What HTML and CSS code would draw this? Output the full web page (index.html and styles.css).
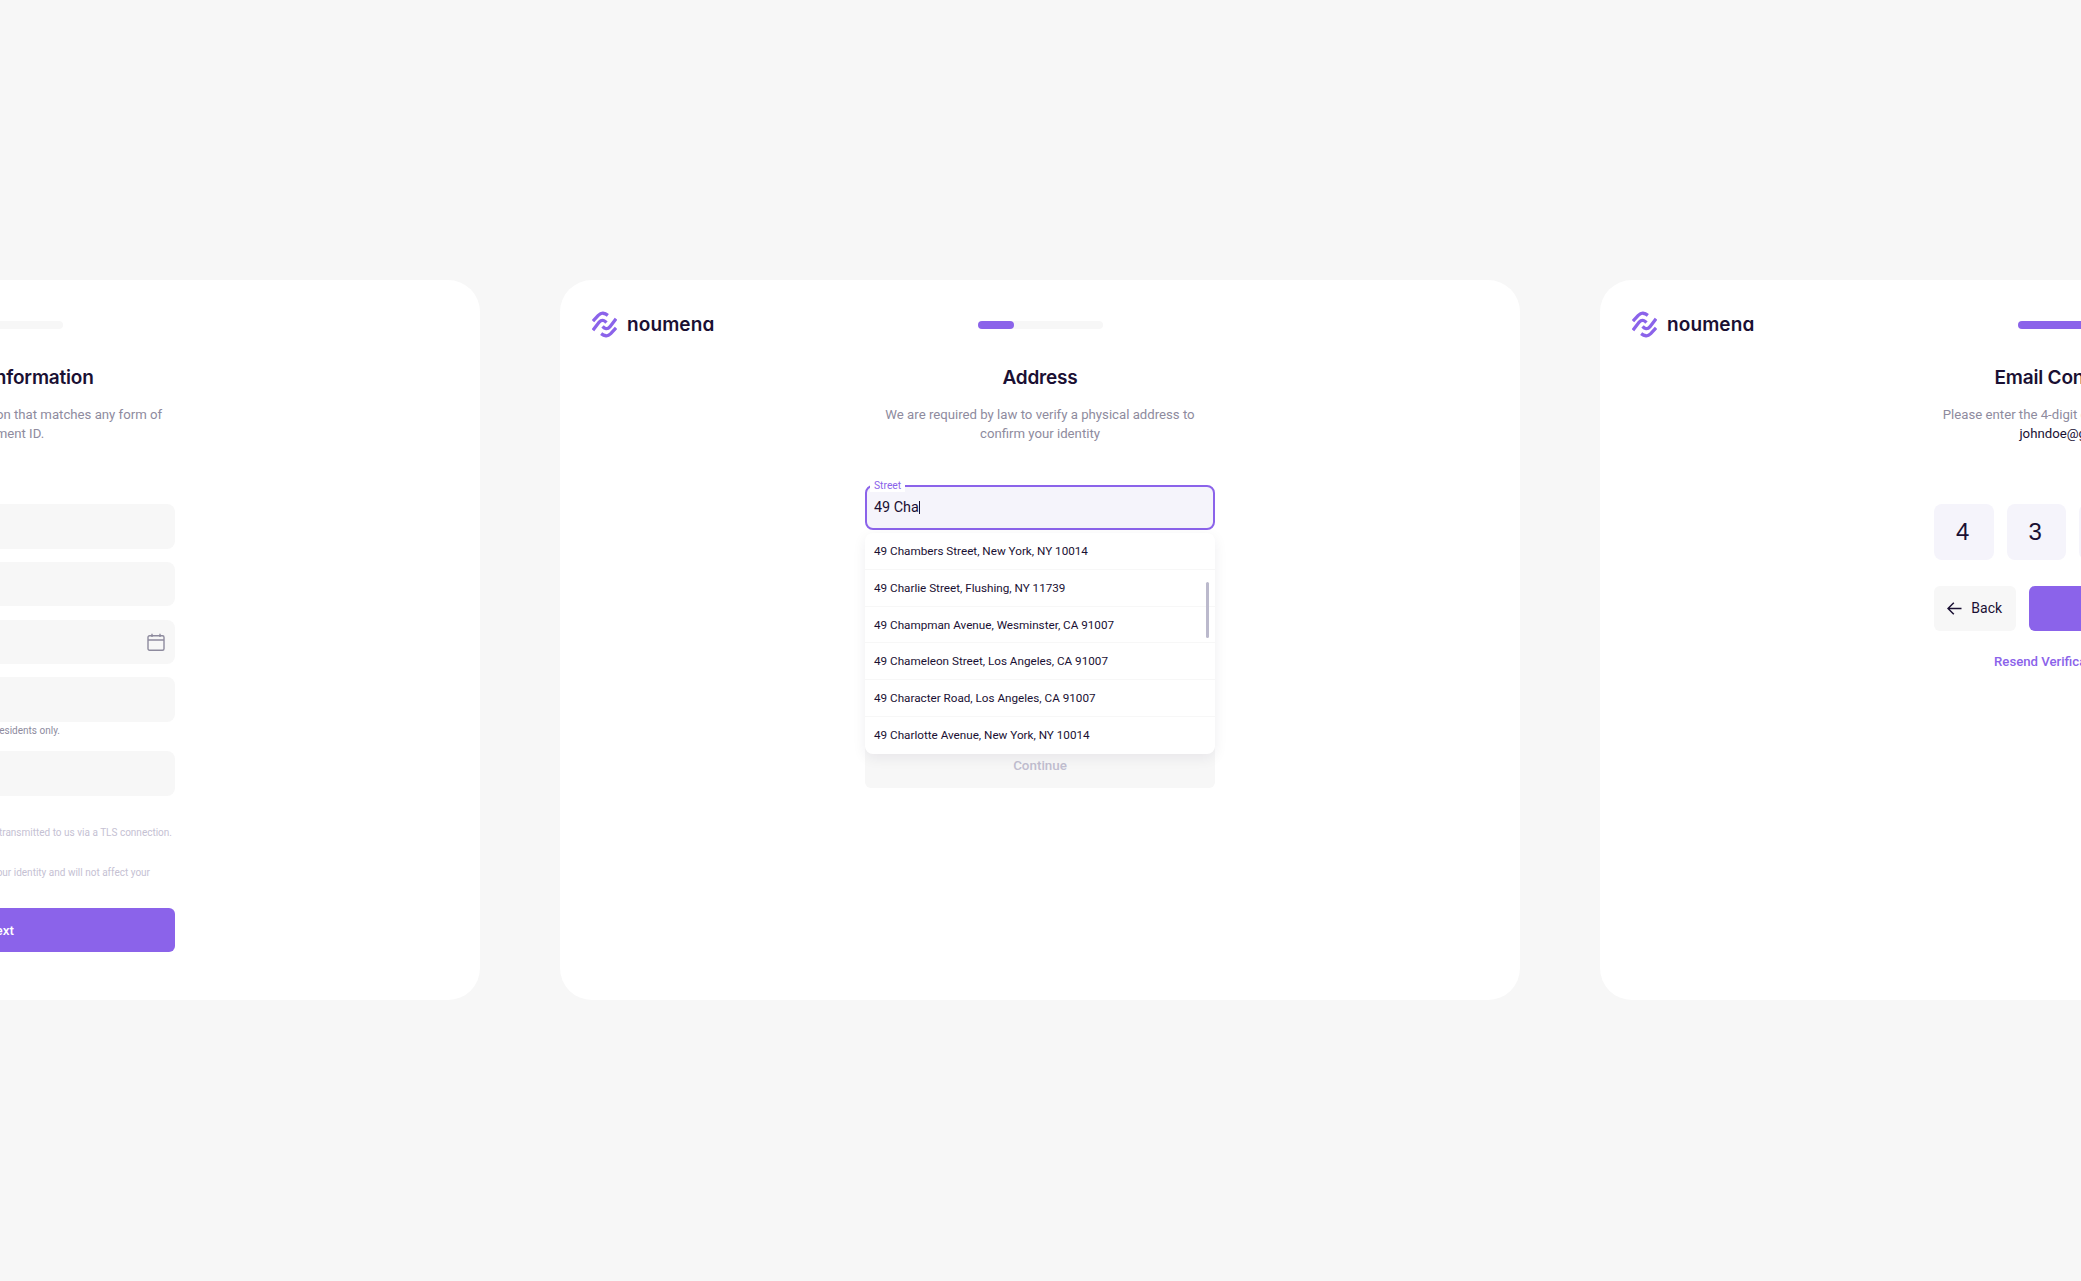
FILE: index.html
```html
<!DOCTYPE html>
<html lang="en">
<head>
<meta charset="utf-8">
<title>Noumena onboarding</title>
<link rel="stylesheet" href="styles.css">
</head>
<body>
<main class="stage">
  <section class="card">
    <header class="card-head">
      <div class="brand">
        <svg class="brand-mark" viewBox="0 0 26 27" fill="none"><path class="mark-path" d="M1 10L6.500 4Q9 1.600 11.500 1.800Q14 2 16.500 4"/><path class="mark-path" d="M1 19.500L7.500 11Q9.500 8.600 12 9.300Q13.500 9.800 15 11.500"/><path class="mark-path" d="M25 17L19.500 23Q17 25.400 14.500 25.200Q12 25 9.500 23"/><path class="mark-path" d="M25 7.500L18.500 16Q16.500 18.400 14 17.700Q12.500 17.200 11 15.500"/></svg>
        <span class="brand-name">noumena</span>
      </div>
      <div class="progress"><div class="progress-fill fill-1"></div></div>
    </header>
    <div class="body">
      <h1 class="title">Personal Information</h1>
      <p class="desc">Please enter your information that matches any form of<br>government ID.</p>
      <form class="form form-wide">
        <div class="field"></div>
        <div class="field"></div>
        <div class="field field-icon">
          <svg class="cal" viewBox="0 0 18 18" fill="none"><rect x="1" y="2.800" width="16" height="14.400" rx="1.500"/><path d="M1 7H17M5 .8V4M13 .8V4"/></svg>
        </div>
        <div class="field"></div>
        <p class="hint">This information is required from US residents only.</p>
        <div class="field field-after-hint"></div>
        <p class="fine fine-first">All information is encrypted and transmitted to us via a TLS connection.</p>
        <p class="fine fine-second">This check is only used to verify your identity and will not affect your</p>
        <button class="btn btn-primary btn-next" type="button">Next</button>
      </form>
    </div>
  </section>

  <section class="card">
    <header class="card-head">
      <div class="brand">
        <svg class="brand-mark" viewBox="0 0 26 27" fill="none"><path class="mark-path" d="M1 10L6.500 4Q9 1.600 11.500 1.800Q14 2 16.500 4"/><path class="mark-path" d="M1 19.500L7.500 11Q9.500 8.600 12 9.300Q13.500 9.800 15 11.500"/><path class="mark-path" d="M25 17L19.500 23Q17 25.400 14.500 25.200Q12 25 9.500 23"/><path class="mark-path" d="M25 7.500L18.500 16Q16.500 18.400 14 17.700Q12.500 17.200 11 15.500"/></svg>
        <span class="brand-name">noumena</span>
      </div>
      <div class="progress"><div class="progress-fill fill-2"></div></div>
    </header>
    <div class="body">
      <h1 class="title">Address</h1>
      <p class="desc">We are required by law to verify a physical address to<br>confirm your identity</p>
      <form class="form form-address">
        <div class="street">
          <span class="street-label">Street</span>
          <span class="street-value">49 Cha<i class="caret"></i></span>
        </div>
        <button class="btn btn-disabled" type="button">Continue</button>
        <ul class="suggest">
          <li>49 Chambers Street, New York, NY 10014</li>
          <li>49 Charlie Street, Flushing, NY 11739</li>
          <li>49 Champman Avenue, Wesminster, CA 91007</li>
          <li>49 Chameleon Street, Los Angeles, CA 91007</li>
          <li>49 Character Road, Los Angeles, CA 91007</li>
          <li>49 Charlotte Avenue, New York, NY 10014</li>
          <li class="scroll-thumb" aria-hidden="true"></li>
        </ul>
      </form>
    </div>
  </section>

  <section class="card">
    <header class="card-head">
      <div class="brand">
        <svg class="brand-mark" viewBox="0 0 26 27" fill="none"><path class="mark-path" d="M1 10L6.500 4Q9 1.600 11.500 1.800Q14 2 16.500 4"/><path class="mark-path" d="M1 19.500L7.500 11Q9.500 8.600 12 9.300Q13.500 9.800 15 11.500"/><path class="mark-path" d="M25 17L19.500 23Q17 25.400 14.500 25.200Q12 25 9.500 23"/><path class="mark-path" d="M25 7.500L18.500 16Q16.500 18.400 14 17.700Q12.500 17.200 11 15.500"/></svg>
        <span class="brand-name">noumena</span>
      </div>
      <div class="progress"><div class="progress-fill fill-3"></div></div>
    </header>
    <div class="body">
      <h1 class="title">Email Confirmation</h1>
      <p class="desc">Please enter the 4-digit code sent to your email<br><span class="desc-strong">johndoe@gmail.com</span></p>
      <form class="form form-code">
        <div class="digits">
          <div class="digit">4</div>
          <div class="digit">3</div>
          <div class="digit"></div>
          <div class="digit"></div>
        </div>
        <div class="actions">
          <button class="btn btn-back" type="button">
            <svg class="arrow" viewBox="0 0 15 13" fill="none"><path d="M14.500 6.500H1M6.800 .8L1 6.500L6.800 12.200"/></svg>
            Back
          </button>
          <button class="btn btn-primary btn-grow" type="button">Next</button>
        </div>
        <a class="resend">Resend Verification Message</a>
      </form>
    </div>
  </section>
</main>
</body>
</html>
```
FILE: styles.css
```css
* { box-sizing: border-box; }
html, body { margin: 0; padding: 0; height: 100%; }
body {
  background: #f7f7f7;
  overflow: hidden;
  font-family: "Roboto", "Liberation Sans", sans-serif;
  color: #1a1033;
}
.stage {
  height: 1281px;
  padding-top: 280px;
  display: flex;
  justify-content: center;
  gap: 80px;
  margin-left: -1px;
}
.card {
  flex: 0 0 960px;
  height: 720px;
  background: #fff;
  border-radius: 32px;
  display: flex;
  flex-direction: column;
  position: relative;
}
.card-head {
  height: 48px;
  margin-top: 32px;
  padding: 0 32px;
  display: grid;
  grid-template-columns: 1fr 125px 1fr;
  align-items: start;
}
.brand { display: flex; align-items: center; gap: 10px; height: 25px; }
.brand-mark { width: 25px; height: 27px; flex: none; }
.mark-path { stroke: #8b63ea; stroke-width: 3.400; }
.brand-name {
  font-family: "Inter", sans-serif;
  font-size: 19px;
  font-weight: 600;
  font-feature-settings: "cv11";
  letter-spacing: 0.1px;
  line-height: 25px;
}
.progress {
  grid-column: 2;
  height: 8px;
  margin-top: 9px;
  background: #f7f7f7;
  border-radius: 4px;
}
.progress-fill { height: 100%; background: #8b63ea; border-radius: 4px; }
.fill-1 { width: 0; }
.fill-2 { width: 36px; }
.fill-3 { width: 72px; }
.body { display: flex; flex-direction: column; align-items: center; }
.title {
  margin: 5px 0 0;
  font-family: "Inter", sans-serif;
  font-size: 19px;
  font-weight: 600;
  line-height: 26px;
  letter-spacing: -0.2px;
}
.desc {
  margin: 14px 0 0;
  font-size: 13.200px;
  line-height: 19.200px;
  text-align: center;
  color: #8e8b9e;
}
.desc-strong { color: #1a1033; }
.form { display: flex; flex-direction: column; position: relative; }
.form-wide { width: 350px; margin-top: 60.600px; }
.form-address { width: 350px; margin-top: 41.600px; }
.form-code { width: 292px; margin-top: 60.600px; }

.field {
  height: 44.500px;
  margin-bottom: 13.250px;
  background: #f7f7f7;
  border-radius: 8px;
  display: flex;
  align-items: center;
  justify-content: flex-end;
}
.field-icon { padding-right: 10px; }
.cal { width: 18px; height: 18px; stroke: #8e8b9e; stroke-width: 1.400; }
.hint {
  margin: -11px 0 0;
  padding-right: 115px;
  font-size: 10px;
  line-height: 14px;
  color: #8e8b9e;
  white-space: nowrap;
  text-align: right;
}
.field-after-hint { margin-top: 13px; }
.fine {
  margin: 0;
  font-size: 10px;
  line-height: 14px;
  color: #c5c1d3;
  white-space: nowrap;
  text-align: right;
}
.fine-first { margin-top: 17px; padding-right: 3px; }
.fine-second { margin-top: 26px; padding-right: 25px; }
.btn {
  height: 44.500px;
  border: 0;
  border-radius: 6px;
  font-family: inherit;
  font-size: 13.400px;
  font-weight: 500;
  display: flex;
  align-items: center;
  justify-content: center;
}
.btn-primary { background: #8b63ea; color: #fff; }
.btn-next { margin-top: 28px; }
.street {
  height: 44.500px;
  background: #f5f4fb;
  border: 2px solid #8b63ea;
  border-radius: 8px;
  padding-left: 7px;
  display: flex;
  align-items: center;
  position: relative;
}
.street-label {
  position: absolute;
  left: 3px;
  top: -7px;
  padding: 0 4px;
  height: 12px;
  background: #fff;
  color: #8b63ea;
  font-size: 10.300px;
  line-height: 11px;
}
.street-value { font-size: 14.400px; }
.caret {
  display: inline-block;
  width: 1px;
  height: 13px;
  background: #1a1033;
  vertical-align: -2px;
}
.btn-disabled {
  margin-top: 214px;
  background: #f7f7f7;
  color: #c1bed0;
}
.suggest {
  position: absolute;
  left: 0;
  right: 0;
  top: 48px;
  margin: 0;
  padding: 0;
  list-style: none;
  background: #fff;
  border-radius: 8px;
  box-shadow: 0 4px 14px rgba(26, 16, 51, 0.07);
  overflow: hidden;
}
.suggest li {
  height: 36.800px;
  padding-left: 9px;
  font-size: 11.700px;
  line-height: 36px;
  border-bottom: 1px solid #f7f7f7;
}
.suggest li:nth-child(6) { border-bottom: 0; }
.suggest .scroll-thumb {
  position: absolute;
  right: 6px;
  top: 49px;
  width: 3.500px;
  height: 56px;
  padding: 0;
  border: 0;
  background: #bbb9cc;
  border-radius: 2px;
}
.digits { display: flex; gap: 13px; }
.digit {
  width: 59.500px;
  height: 56px;
  padding-right: 2px;
  background: #f5f4fb;
  border-radius: 8px;
  font-family: "Liberation Sans", sans-serif;
  font-size: 24px;
  display: flex;
  align-items: center;
  justify-content: center;
}
.actions { display: flex; gap: 13px; margin-top: 26px; }
.btn-back {
  flex: 0 0 81.500px;
  background: #f7f7f7;
  color: #1a1033;
  gap: 9px;
  font-size: 14px;
  font-weight: 400;
}
.arrow { width: 15px; height: 13px; stroke: #1a1033; stroke-width: 1.500; }
.btn-grow { flex: 1; }
.resend {
  margin-top: 21.500px;
  text-align: center;
  font-size: 13.200px;
  font-weight: 500;
  line-height: 20px;
  color: #8b63ea;
}
```
